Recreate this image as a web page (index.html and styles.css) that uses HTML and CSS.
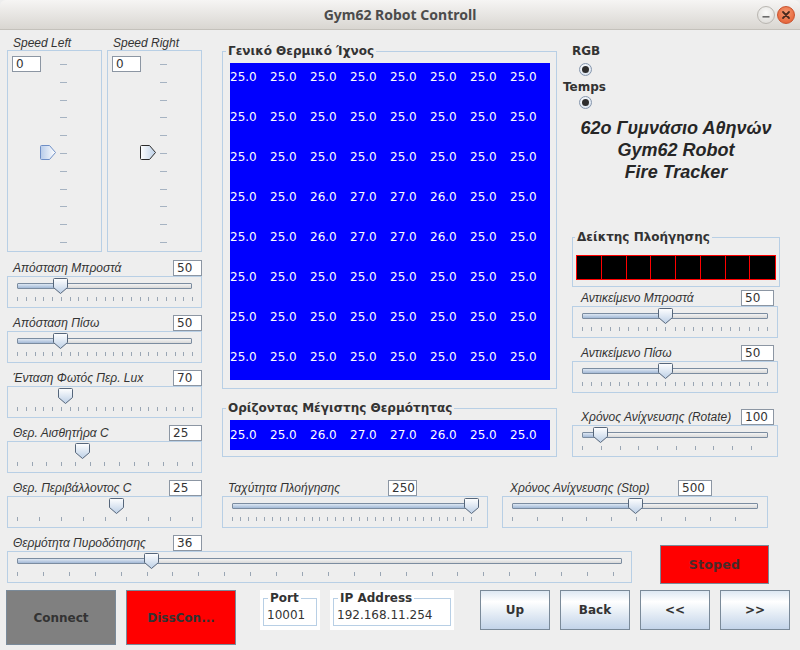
FILE: index.html
```html
<!DOCTYPE html>
<html lang="el">
<head>
<meta charset="utf-8">
<title>Gym62 Robot Controll</title>
<link rel="stylesheet" href="styles.css">
</head>
<body>
<svg class="defs" width="0" height="0" aria-hidden="true">
  <defs>
    <linearGradient id="gv" x1="0" y1="0" x2="0" y2="1">
      <stop offset="0" stop-color="#ffffff"/>
      <stop offset="1" stop-color="#bccfe6"/>
    </linearGradient>
    <linearGradient id="gh" x1="0" y1="0" x2="1" y2="0">
      <stop offset="0" stop-color="#ffffff"/>
      <stop offset="1" stop-color="#bccfe6"/>
    </linearGradient>
    <linearGradient id="ghb" x1="0" y1="0" x2="1" y2="0">
      <stop offset="0" stop-color="#b7cbe9"/>
      <stop offset="1" stop-color="#ffffff"/>
    </linearGradient>
    <symbol id="hthumb" viewBox="0 0 15 16">
      <path d="M1.5 0.5 H13.5 Q14.5 0.5 14.5 1.5 V9.5 L7.5 15.5 L0.5 9.5 V1.5 Q0.5 0.5 1.5 0.5 Z" fill="url(#gv)" stroke="#56667a" stroke-width="1"/>
    </symbol>
  </defs>
</svg>
<div class="window">
  <header class="titlebar">
    <span class="title">Gym62 Robot Controll</span>
    <div class="wm">
      <span class="wm-btn wm-min"><svg viewBox="0 0 18 18" width="18" height="18"><rect x="5.5" y="10" width="7" height="1.6" fill="#6b6b6b"/></svg></span>
      <span class="wm-btn wm-close"><svg viewBox="0 0 18 18" width="18" height="18"><path d="M6 6 L12 12 M12 6 L6 12" stroke="#4a2a1e" stroke-width="1.8" stroke-linecap="round"/></svg></span>
    </div>
  </header>

  <main class="content">
    <div class="main">
      <section class="leftcol">
        <div class="speeds">
          <div class="speed">
            <div class="lbl">Speed Left</div>
            <div class="vbox">
              <span class="field vfield">0</span>
              <div class="vticks"><i></i><i></i><i></i><i></i><i></i><i></i><i></i><i></i><i></i><i></i><i></i></div>
              <svg class="vthumb" viewBox="0 0 16 15"><path d="M0.5 1.5 Q0.5 0.5 1.5 0.5 H9.5 L15.5 7.5 L9.5 14.5 H1.5 Q0.5 14.5 0.5 13.5 Z" fill="url(#ghb)" stroke="#6e8ec6"/></svg>
            </div>
          </div>
          <div class="speed">
            <div class="lbl">Speed Right</div>
            <div class="vbox">
              <span class="field vfield">0</span>
              <div class="vticks"><i></i><i></i><i></i><i></i><i></i><i></i><i></i><i></i><i></i><i></i><i></i></div>
              <svg class="vthumb" viewBox="0 0 16 15"><path d="M0.5 1.5 Q0.5 0.5 1.5 0.5 H9.5 L15.5 7.5 L9.5 14.5 H1.5 Q0.5 14.5 0.5 13.5 Z" fill="url(#gh)" stroke="#2c2c2c"/></svg>
            </div>
          </div>
        </div>

        <div class="slider first">
          <div class="s-head"><span class="s-label">Απόσταση Μπροστά</span><span class="field w28">50</span></div>
          <div class="s-box">
            <div class="track"><div class="fill" style="width:44px"></div></div>
            <div class="ticks" style="width:176px"><i></i><i></i><i></i><i></i><i></i><i></i><i></i><i></i><i></i><i></i><i></i><i></i><i></i><i></i><i></i><i></i><i></i><i></i><i></i><i></i><i></i></div>
            <svg class="thumb" style="left:45px"><use href="#hthumb"/></svg>
          </div>
        </div>

        <div class="slider">
          <div class="s-head"><span class="s-label">Απόσταση Πίσω</span><span class="field w28">50</span></div>
          <div class="s-box">
            <div class="track"><div class="fill" style="width:44px"></div></div>
            <div class="ticks" style="width:176px"><i></i><i></i><i></i><i></i><i></i><i></i><i></i><i></i><i></i><i></i><i></i><i></i><i></i><i></i><i></i><i></i><i></i><i></i><i></i><i></i><i></i></div>
            <svg class="thumb" style="left:45px"><use href="#hthumb"/></svg>
          </div>
        </div>

        <div class="slider">
          <div class="s-head"><span class="s-label">Ένταση Φωτός Περ. Lux</span><span class="field w28">70</span></div>
          <div class="s-box">
            <div class="track none"></div>
            <div class="ticks" style="width:176px"><i></i><i></i><i></i><i></i><i></i><i></i><i></i><i></i><i></i><i></i><i></i><i></i><i></i><i></i><i></i><i></i><i></i><i></i><i></i><i></i><i></i></div>
            <svg class="thumb" style="left:50px"><use href="#hthumb"/></svg>
          </div>
        </div>

        <div class="slider">
          <div class="s-head"><span class="s-label">Θερ. Αισθητήρα C</span><span class="field w32">25</span></div>
          <div class="s-box">
            <div class="track none"></div>
            <div class="ticks" style="width:176px"><i></i><i></i><i></i><i></i><i></i><i></i><i></i><i></i><i></i><i></i><i></i><i></i><i></i></div>
            <svg class="thumb" style="left:67px"><use href="#hthumb"/></svg>
          </div>
        </div>

        <div class="slider">
          <div class="s-head"><span class="s-label">Θερ. Περιβάλλοντος C</span><span class="field w32">25</span></div>
          <div class="s-box">
            <div class="track none"></div>
            <div class="ticks" style="width:176px"><i></i><i></i><i></i><i></i><i></i><i></i><i></i><i></i><i></i></div>
            <svg class="thumb" style="left:101px"><use href="#hthumb"/></svg>
          </div>
        </div>
      </section>

      <section class="rightarea">
        <div class="upper">
          <div class="centercol">
            <fieldset class="fs fs-heat">
              <legend>Γενικό Θερμικό Ίχνος</legend>
              <div class="heat">
                <span>25.0</span><span>25.0</span><span>25.0</span><span>25.0</span><span>25.0</span><span>25.0</span><span>25.0</span><span>25.0</span>
                <span>25.0</span><span>25.0</span><span>25.0</span><span>25.0</span><span>25.0</span><span>25.0</span><span>25.0</span><span>25.0</span>
                <span>25.0</span><span>25.0</span><span>25.0</span><span>25.0</span><span>25.0</span><span>25.0</span><span>25.0</span><span>25.0</span>
                <span>25.0</span><span>25.0</span><span>26.0</span><span>27.0</span><span>27.0</span><span>26.0</span><span>25.0</span><span>25.0</span>
                <span>25.0</span><span>25.0</span><span>26.0</span><span>27.0</span><span>27.0</span><span>26.0</span><span>25.0</span><span>25.0</span>
                <span>25.0</span><span>25.0</span><span>25.0</span><span>25.0</span><span>25.0</span><span>25.0</span><span>25.0</span><span>25.0</span>
                <span>25.0</span><span>25.0</span><span>25.0</span><span>25.0</span><span>25.0</span><span>25.0</span><span>25.0</span><span>25.0</span>
                <span>25.0</span><span>25.0</span><span>25.0</span><span>25.0</span><span>25.0</span><span>25.0</span><span>25.0</span><span>25.0</span>
              </div>
            </fieldset>
            <fieldset class="fs fs-horizon">
              <legend>Ορίζοντας Μέγιστης Θερμότητας</legend>
              <div class="heat-row">
                <span>25.0</span><span>25.0</span><span>26.0</span><span>27.0</span><span>27.0</span><span>26.0</span><span>25.0</span><span>25.0</span>
              </div>
            </fieldset>
          </div>

          <div class="rightcol">
            <div class="opt opt-rgb">RGB</div>
            <span class="radio"></span>
            <div class="opt opt-temps">Temps</div>
            <span class="radio radio2"></span>
            <div class="brand">
              <div>62o Γυμνάσιο Αθηνών</div>
              <div>Gym62 Robot</div>
              <div>Fire Tracker</div>
            </div>
            <fieldset class="fs fs-nav">
              <legend>Δείκτης Πλοήγησης</legend>
              <div class="navbar"><span></span><span></span><span></span><span></span><span></span><span></span><span></span><span></span></div>
            </fieldset>

            <div class="slider rs first-r">
              <div class="s-head"><span class="s-label">Αντικείμενο Μπροστά</span><span class="field w33">50</span></div>
              <div class="s-box">
                <div class="track"><div class="fill" style="width:84px"></div></div>
                <div class="ticks" style="width:186px"><i></i><i></i><i></i><i></i><i></i><i></i><i></i><i></i><i></i><i></i><i></i><i></i><i></i><i></i><i></i><i></i><i></i><i></i><i></i><i></i><i></i></div>
                <svg class="thumb" style="left:85px"><use href="#hthumb"/></svg>
              </div>
            </div>

            <div class="slider rs">
              <div class="s-head"><span class="s-label">Αντικείμενο Πίσω</span><span class="field w33">50</span></div>
              <div class="s-box">
                <div class="track"><div class="fill" style="width:84px"></div></div>
                <div class="ticks" style="width:186px"><i></i><i></i><i></i><i></i><i></i><i></i><i></i><i></i><i></i><i></i><i></i><i></i><i></i><i></i><i></i><i></i><i></i><i></i><i></i><i></i><i></i></div>
                <svg class="thumb" style="left:85px"><use href="#hthumb"/></svg>
              </div>
            </div>

            <div class="slider rs rotate">
              <div class="s-head"><span class="s-label">Χρόνος Ανίχνευσης (Rotate)</span><span class="field w33">100</span></div>
              <div class="s-box">
                <div class="track"><div class="fill" style="width:19px"></div></div>
                <div class="ticks" style="width:170px"><i></i><i></i><i></i><i></i><i></i><i></i><i></i><i></i><i></i><i></i></div>
                <svg class="thumb" style="left:20px"><use href="#hthumb"/></svg>
              </div>
            </div>
          </div>
        </div>

        <div class="lower">
          <div class="slider speednav">
            <div class="s-head"><span class="s-label">Ταχύτητα Πλοήγησης</span><span class="field w29">250</span></div>
            <div class="s-box">
              <div class="track"><div class="fill" style="width:240px"></div></div>
              <div class="ticks" style="width:240px"><i></i><i></i><i></i><i></i><i></i><i></i><i></i><i></i><i></i><i></i><i></i><i></i><i></i><i></i><i></i><i></i><i></i><i></i><i></i><i></i><i></i><i></i><i></i><i></i><i></i><i></i><i></i><i></i><i></i><i></i><i></i></div>
              <svg class="thumb" style="left:241px"><use href="#hthumb"/></svg>
            </div>
          </div>
          <div class="slider stopnav">
            <div class="s-head"><span class="s-label">Χρόνος Ανίχνευσης (Stop)</span><span class="field w34">500</span></div>
            <div class="s-box">
              <div class="track"><div class="fill" style="width:124px"></div></div>
              <div class="ticks" style="width:224px"><i></i><i></i><i></i><i></i><i></i><i></i><i></i><i></i><i></i><i></i></div>
              <svg class="thumb" style="left:125px"><use href="#hthumb"/></svg>
            </div>
          </div>
        </div>
      </section>
    </div>

    <div class="row3">
      <div class="slider fire">
        <div class="s-head"><span class="s-label">Θερμότητα Πυροδότησης</span><span class="field w28">36</span></div>
        <div class="s-box">
          <div class="track"><div class="fill" style="width:135px"></div></div>
          <div class="ticks" style="width:597px"><i></i><i></i><i></i><i></i><i></i><i></i><i></i><i></i><i></i><i></i><i></i><i></i><i></i><i></i><i></i><i></i><i></i><i></i><i></i><i></i><i></i><i></i><i></i><i></i></div>
          <svg class="thumb" style="left:136px"><use href="#hthumb"/></svg>
        </div>
      </div>
      <button class="btn btn-stop">Stoped</button>
    </div>

    <div class="row4">
      <button class="btn btn-connect">Connect</button>
      <button class="btn btn-disc">DissCon...</button>
      <div class="netbox net-port">
        <fieldset class="fs fs-net">
          <legend>Port</legend>
          <div class="netval">10001</div>
        </fieldset>
      </div>
      <div class="netbox net-ip">
        <fieldset class="fs fs-net">
          <legend>IP Address</legend>
          <div class="netval">192.168.11.254</div>
        </fieldset>
      </div>
      <button class="btn btn-nav nav-up">Up</button>
      <button class="btn btn-nav">Back</button>
      <button class="btn btn-nav">&lt;&lt;</button>
      <button class="btn btn-nav">&gt;&gt;</button>
    </div>
  </main>
</div>
</body>
</html>
```

FILE: styles.css
```css
* { box-sizing: border-box; }
html, body { margin: 0; padding: 0; }
body {
  width: 800px;
  height: 650px;
  overflow: hidden;
  background: #eeeeee;
  font-family: "DejaVu Sans", sans-serif;
  font-size: 12px;
  color: #333333;
}
.defs { display: block; width: 0; height: 0; overflow: hidden; }

.window { width: 800px; height: 650px; display: flex; flex-direction: column; background: #eeeeee; }

/* title bar */
.titlebar {
  height: 30px;
  flex: none;
  display: grid;
  grid-template-columns: 1fr auto 1fr;
  align-items: center;
  background: linear-gradient(#f6f5f4, #e6e4e1 55%, #d9d6d1);
  border-bottom: 1px solid #c4c1bb;
  border-radius: 6px 6px 0 0;
}
.title {
  grid-column: 2;
  font-family: "Noto Sans", "DejaVu Sans", sans-serif;
  font-weight: bold;
  font-size: 14px;
  color: #4c4c4c;
}
.wm { grid-column: 3; justify-self: end; display: flex; gap: 2px; margin-right: 5px; }
.wm-btn { width: 18px; height: 18px; border-radius: 50%; display: block; }
.wm-btn svg { display: block; }
.wm-min { background: radial-gradient(circle at 50% 35%, #fbfbfa, #d8d6d2); border: 1px solid #b9b6b1; }
.wm-min svg { margin: -1px; }
.wm-close { background: radial-gradient(circle at 50% 35%, #f59a72, #e2572b); border: 1px solid #c9522e; }
.wm-close svg { margin: -1px; }

/* layout */
.content { display: flex; flex-direction: column; }
.main { display: flex; align-items: flex-start; }
.leftcol { width: 195px; margin-left: 7px; display: flex; flex-direction: column; }
.rightarea { margin-left: 20px; display: flex; flex-direction: column; }
.upper { display: flex; align-items: flex-start; }
.centercol { width: 335px; display: flex; flex-direction: column; }
.rightcol { width: 228px; margin-left: 5px; display: flex; flex-direction: column; }
.lower { display: flex; margin-top: 23px; gap: 14px; }

/* text fields */
.field {
  display: block;
  height: 16px;
  background: #ffffff;
  border: 1px solid #8c96a3;
  font-family: "DejaVu Sans", sans-serif;
  font-size: 12px;
  line-height: 14px;
  padding: 0 3px;
  color: #333;
  flex: none;
}
.w28 { width: 29px; }
.w29 { width: 29px; }
.w32 { width: 33px; }
.w33 { width: 33px; }
.w34 { width: 34px; }

/* vertical speed sliders */
.speeds { display: flex; gap: 5px; margin-top: 6px; }
.speed { width: 95px; }
.speed .lbl {
  height: 14px;
  line-height: 14px;
  padding-left: 6px;
  font-family: "Liberation Sans", sans-serif;
  font-style: italic;
  font-size: 12px;
}
.vbox {
  position: relative;
  height: 202px;
  border: 1px solid #b8cfe5;
  display: flex;
  align-items: flex-start;
}
.vfield { width: 29px; margin: 5px 0 0 4px; }
.vticks {
  margin: 13px 0 0 19px;
  height: 179px;
  width: 7px;
  display: flex;
  flex-direction: column;
  justify-content: space-between;
}
.vticks i { display: block; width: 7px; height: 1px; background: #a6b3c2; }
.vthumb { position: absolute; left: 32px; top: 94px; width: 16px; height: 15px; }

/* horizontal sliders */
.slider { margin-top: 7px; }
.slider.first { margin-top: 8px; }
.s-head { display: flex; align-items: center; height: 16px; }
.s-label {
  flex: 1;
  padding-left: 6px;
  font-family: "Liberation Sans", sans-serif;
  font-style: italic;
  font-size: 12px;
  line-height: 16px;
  color: #333;
  white-space: nowrap;
}
.s-box {
  position: relative;
  height: 32px;
  border: 1px solid #b8cfe5;
}
.track {
  margin: 6px 9px 0;
  height: 6px;
  border: 1px solid #7b8ca0;
  border-radius: 1px;
  background: linear-gradient(#f3f3f3, #d9d9d9);
  display: flex;
}
.track .fill { height: 100%; background: linear-gradient(#dde7f3, #a3b9d6); }
.track.none { visibility: hidden; }
.ticks {
  display: flex;
  justify-content: space-between;
  height: 4px;
  margin: 8px 0 0 9px;
}
.ticks i { display: block; width: 1px; height: 4px; background: #9aa6b4; }
.thumb { position: absolute; top: 1px; width: 15px; height: 16px; }

/* right column sliders */
.rs { width: 206px; margin-left: 10px; }
.rs .s-label { padding-left: 9px; }
.rs .field { margin-right: 4px; }
.rs.first-r { margin-top: 3px; }
.rs.rotate { margin-top: 16px; }

/* lower sliders */
.speednav { width: 266px; margin-top: 0; }
.speednav .field { margin-right: 71px; }
.stopnav { width: 266px; margin-top: 0; }
.stopnav .s-label { padding-left: 8px; }
.stopnav .field { margin-right: 56px; }

/* fieldsets (titled borders) */
.fs {
  margin: 0;
  border: 1px solid #b8cfe5;
  min-width: 0;
}
.fs legend {
  font-family: "DejaVu Sans", sans-serif;
  font-weight: bold;
  font-size: 12px;
  line-height: 14px;
  padding: 0 2px;
  color: #333;
}
.fs-heat { margin-top: 14px; padding: 5px 6px 8px 7px; }
.fs-heat legend, .fs-horizon legend { margin-left: -4px; }
.fs-horizon { margin-top: 12px; padding: 5px 6px 6px 7px; }

.heat {
  width: 320px;
  height: 317px;
  background: #0000ff;
  color: #ffffff;
  display: grid;
  grid-template-columns: repeat(8, 40px);
  grid-auto-rows: 40px;
  overflow: hidden;
}
.heat span { padding-top: 7px; line-height: 15px; font-size: 12px; }
.heat-row {
  width: 320px;
  height: 30px;
  background: #0000ff;
  color: #ffffff;
  display: grid;
  grid-template-columns: repeat(8, 40px);
  align-items: center;
  font-size: 12px;
  line-height: 15px;
}

/* right column top */
.opt { font-weight: bold; font-size: 12px; line-height: 14px; color: #333; }
.opt-rgb { margin-top: 14px; padding-left: 10px; }
.opt-temps { margin-top: 4px; padding-left: 1px; }
.radio {
  display: flex;
  align-items: center;
  justify-content: center;
  width: 13px;
  height: 13px;
  margin: 5px 0 0 17px;
  border-radius: 50%;
  border: 1px solid #8697ad;
  background: radial-gradient(circle at 40% 35%, #ffffff, #cfdbea);
}
.radio::after { content: ""; width: 7px; height: 7px; border-radius: 50%; background: #2e2e2e; }
.radio2 { margin-top: 2px; }

.brand {
  margin-top: 8px;
  text-align: center;
  font-family: "Liberation Sans", sans-serif;
  font-weight: bold;
  font-style: italic;
  font-size: 18px;
  line-height: 22px;
  color: #262626;
}
.fs-nav { margin: 47px 0 0 10px; width: 208px; padding: 11px 2px 6px 3px; }
.fs-nav legend { margin-left: -1px; }
.navbar {
  width: 200px;
  height: 25px;
  background: #000;
  border: 1px solid #ff0000;
  display: grid;
  grid-template-columns: repeat(8, 1fr);
}
.navbar span { border-right: 1px solid #ff0000; }
.navbar span:last-child { border-right: 0; }

/* row 3 */
.row3 { display: flex; align-items: flex-start; margin-top: 7px; }
.fire { width: 625px; margin: 0 0 0 7px; }
.fire .field { margin-right: 430px; }

/* buttons */
.btn {
  font-family: "DejaVu Sans", sans-serif;
  font-weight: bold;
  font-size: 12px;
  color: #333;
  border: 1px solid #7a8a99;
  padding: 0;
  margin: 0;
  cursor: default;
}
.btn-stop {
  width: 109px;
  height: 39px;
  margin: 10px 0 0 28px;
  background: #ff0000;
  color: #4a2a2a;
  font-size: 12.5px;
  letter-spacing: 0.3px;
}
.row4 { display: flex; align-items: flex-start; margin-top: 6px; }
.btn-connect { width: 110px; height: 55px; margin-left: 6px; background: #808080; }
.btn-disc { width: 110px; height: 55px; margin-left: 10px; background: #ff0000; }
.netbox { height: 40px; background: #ffffff; padding: 1px 3px 0; }
.net-port { width: 60px; margin-left: 24px; }
.net-ip { width: 124px; margin-left: 10px; }
.fs-net { padding: 2px 2px 2px 3px; }
.fs-net legend { margin-left: 1px; }
.netval { font-size: 12px; line-height: 16px; color: #333; white-space: nowrap; }
.btn-nav {
  width: 70px;
  height: 40px;
  margin-left: 10px;
  background: linear-gradient(#dde8f3 0%, #ffffff 28%, #ecf2f8 50%, #c3d4e9 100%);
}
.nav-up { margin-left: 26px; }
```
